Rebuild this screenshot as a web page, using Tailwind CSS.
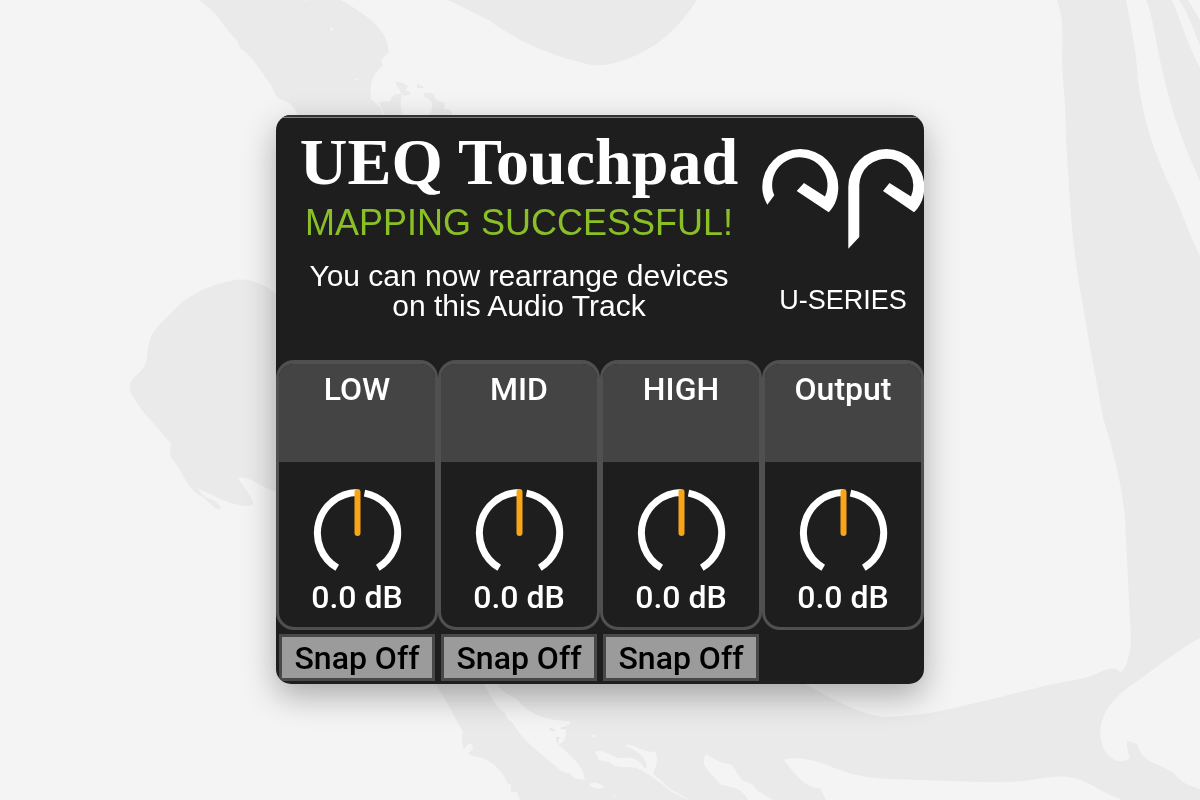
<!DOCTYPE html>
<html lang="en">
<head>
<meta charset="utf-8">
<meta name="viewport" content="width=device-width, initial-scale=1">
<title>UEQ Touchpad</title>
<script src="https://cdn.jsdelivr.net/npm/@tailwindcss/browser@4"></script>
</head>
<body class="bg-[#f4f4f4] font-['Roboto',sans-serif]">
<!-- Decorative backdrop -->
<svg class="fixed inset-0 -z-10 h-full w-full" viewBox="0 0 1200 800" preserveAspectRatio="xMidYMid slice" aria-hidden="true">
  <g fill="#eaeaea">
    <path d="M199 0C213 9 220 20 230 33C239 43 235 37 241 49C249 53 260 69 270 84C277 94 273 97 285 101C292 104 297 110 299 120H386L380 107L371 99C369 84 373 73 383 66L381 60L389 52C387 38 382 30 373 22C364 13 353 8 341 0Z"/>
    <path d="M379 102L390 101C392 95 396 93 402 94C400 103 400 110 404 118H427C434 110 435 100 424 97V93C432 91 435 95 436 100L445 103L444 109C451 109 454 112 450 118H386Z"/>
    <path d="M395 82C401 81 405 84 408 86L406 90L411 93C408 97 403 96 401 93ZM417 84C421 85 423 86 424 88L417 88Z"/>
    <path d="M448 0C465 8 478 15 490 21C527 47 553 55 583 63C604 70 630 60 655 45C672 33 686 17 697 0Z"/>
    <path d="M276 294C263 282 246 278 235 280C210 285 192 293 178 306L158 326C146 340 149 350 146 362C143 372 136 374 132 380C128 387 130 393 135 400C145 417 156 424 163 435L171 443L170 456L176 464C185 478 190 492 203 497L215 508C222 512 222 506 215 501L205 497L197 488C218 498 233 506 248 506C255 506 254 501 248 493L238 478C250 476 257 485 276 492Z"/>
    <path d="M1057 0C1063 16 1063 30 1062 58C1062 76 1066 100 1066 140C1070 200 1072 250 1082 300C1090 350 1097 382 1103 418C1114 452 1123 490 1125 520L1131 640C1130 655 1127 666 1121 673C1115 665 1106 669 1096 674C1081 681 1070 679 1025 691L950 709C920 716 900 716 886 717C860 715 830 698 800 681H434C445 697 455 718 463 732C461 738 462 745 464 749C468 743 472 740 473 748L468 754C475 758 487 755 501 772C508 781 506 784 511 785V792H517L520 800H688L672 792C658 781 648 773 637 768C625 766 617 769 609 762L599 760L595 752C603 748 611 756 618 758C625 758 635 754 644 768H647C647 757 637 750 625 746C632 741 638 752 655 752C659 759 656 766 653 774L663 782C668 790 679 793 689 800H748C742 788 733 787 721 785C716 778 706 770 704 764Q703 760 706 754C717 761 724 764 731 764L742 780L752 784C759 794 765 794 773 800H826L820 788C808 788 799 780 784 760C788 757 806 758 822 763C844 772 860 778 890 779L980 782Q1010 783 1030 780C1060 776 1067 774 1085 782C1102 790 1108 795 1122 800H1200V789C1183 783 1187 786 1172 772C1155 761 1144 765 1137 744Q1130 741 1127 741Q1126 747 1130 758C1121 766 1105 760 1101 740C1097 716 1113 697 1136 682L1173 655Q1185 646 1200 638V256C1187 230 1182 211 1170 186C1155 154 1144 124 1138 80C1136 45 1130 23 1126 0Z"/>
    <path d="M1146 0C1153 15 1154 37 1166 86C1175 122 1184 145 1200 181V68C1185 38 1182 24 1172 0ZM1179 0C1187 11 1191 24 1200 45V20L1188 0Z"/>
  </g>
  <g fill="#f4f4f4">
    <path d="M484 684C490 695 494 705 505 713L507 718Q510 721 512 722C523 743 550 760 560 770C568 775 568 770 574 778Q577 779 585 780C582 763 572 758 558 744Q566 743 566 732L564 727L570 724V721C552 721 530 717 517 699C505 693 499 690 498 684ZM590 784C595 781 600 784 605 787Q600 791 590 786ZM612 795L617 795L615 796ZM592 735H595V737H592Z"/>
    <path d="M330 28H333V31L330 30ZM355 79H359L357 81ZM304 0H308L306 1Z"/>
  </g>
  <g fill="#e6e6e6"><path d="M549 727L555 730V732L550 730ZM556 737H560L557 744ZM561 727H565V729H561Z"/></g>
</svg>

<!-- Shared knob drawing -->
<svg class="hidden" aria-hidden="true">
  <symbol id="knob" viewBox="0 0 90 86">
    <path d="M45 4.500A40.500 40.500 0 0 0 25.200 79.800M52.500 5.100A40.500 40.500 0 0 1 65.800 79.800" fill="none" stroke="#fff" stroke-width="7"/>
    <path d="M45.500 4V45" stroke="#f9a51a" stroke-width="6" stroke-linecap="round"/>
  </symbol>
</svg>

<main class="grid min-h-screen place-items-center pb-px">
  <section class="w-full max-w-[648px] overflow-hidden rounded-[15px] bg-[#1e1e1e] text-white shadow-[0_12px_32px_rgba(0,0,0,0.30)]">
    <div class="h-[2px] bg-[#303333]"></div>
    <div class="h-px bg-[#808080]"></div>

    <header class="grid h-[242px] grid-cols-4">
      <div class="col-span-3 flex flex-col items-center pt-[8px] text-center font-['Liberation_Sans',Arial,sans-serif]">
        <h1 class="font-['Liberation_Serif',serif] text-[66px] leading-[72px] font-bold whitespace-nowrap">UEQ Touchpad</h1>
        <p class="mt-[5px] text-[36px] leading-[40px] whitespace-nowrap text-[#8abf26]" role="status">MAPPING SUCCESSFUL!</p>
        <p class="mt-[18px] text-[30px] leading-[30px]">You can now rearrange devices<br>on this Audio Track</p>
      </div>
      <div class="flex flex-col items-center pt-[30px] font-['Liberation_Sans',Arial,sans-serif]">
        <svg class="h-[101px] w-full" viewBox="762 148 162 101" fill="#fff" role="img" aria-label="Logo">
          <path d="M767.300 204.700C764 199 762.300 193 762.300 187A38 38 0 0 1 838.300 187C838.300 197 835 206 828.700 212.300L796.700 191L804 183L825 196.500A27.700 27.700 0 1 0 773 192L774.300 195.300Z"/>
          <path d="M848.300 248.700V187A38 38 0 0 1 924.300 187C924.300 197 921 206 914 212.300L883 191L889.500 183L911 196.500A27 27 0 1 0 859.300 187V237Z"/>
        </svg>
        <p class="mt-[35px] text-[27px] leading-[32px]">U-SERIES</p>
      </div>
    </header>

    <div class="grid grid-cols-4 text-center text-[32px] leading-[38px] font-medium">
      <div>
        <div class="h-[270px] overflow-hidden rounded-[18px] border-3 border-t-4 border-[#505050]">
          <h2 class="h-[98px] bg-[#444444] pt-[6px]"><label for="low">LOW</label></h2>
          <div class="relative mx-auto mt-[26px] w-[90px]">
            <svg class="h-[86px] w-full"><use href="#knob"/></svg>
            <input id="low" type="range" min="-24" max="24" value="0" class="absolute inset-0 h-full w-full opacity-0">
          </div>
          <output for="low" class="mt-1 block">0.0 dB</output>
        </div>
        <button type="button" class="mx-[3px] mt-1 mb-[3px] block h-[47px] w-[calc(100%-6px)] border-3 border-[#484848] bg-[#9b9b9b] text-black">Snap Off</button>
      </div>
      <div>
        <div class="h-[270px] overflow-hidden rounded-[18px] border-3 border-t-4 border-[#505050]">
          <h2 class="h-[98px] bg-[#444444] pt-[6px]"><label for="mid">MID</label></h2>
          <div class="relative mx-auto mt-[26px] w-[90px]">
            <svg class="h-[86px] w-full"><use href="#knob"/></svg>
            <input id="mid" type="range" min="-24" max="24" value="0" class="absolute inset-0 h-full w-full opacity-0">
          </div>
          <output for="mid" class="mt-1 block">0.0 dB</output>
        </div>
        <button type="button" class="mx-[3px] mt-1 mb-[3px] block h-[47px] w-[calc(100%-6px)] border-3 border-[#484848] bg-[#9b9b9b] text-black">Snap Off</button>
      </div>
      <div>
        <div class="h-[270px] overflow-hidden rounded-[18px] border-3 border-t-4 border-[#505050]">
          <h2 class="h-[98px] bg-[#444444] pt-[6px]"><label for="high">HIGH</label></h2>
          <div class="relative mx-auto mt-[26px] w-[90px]">
            <svg class="h-[86px] w-full"><use href="#knob"/></svg>
            <input id="high" type="range" min="-24" max="24" value="0" class="absolute inset-0 h-full w-full opacity-0">
          </div>
          <output for="high" class="mt-1 block">0.0 dB</output>
        </div>
        <button type="button" class="mx-[3px] mt-1 mb-[3px] block h-[47px] w-[calc(100%-6px)] border-3 border-[#484848] bg-[#9b9b9b] text-black">Snap Off</button>
      </div>
      <div>
        <div class="h-[270px] overflow-hidden rounded-[18px] border-3 border-t-4 border-[#505050]">
          <h2 class="h-[98px] bg-[#444444] pt-[6px]"><label for="output">Output</label></h2>
          <div class="relative mx-auto mt-[26px] w-[90px]">
            <svg class="h-[86px] w-full"><use href="#knob"/></svg>
            <input id="output" type="range" min="-24" max="24" value="0" class="absolute inset-0 h-full w-full opacity-0">
          </div>
          <output for="output" class="mt-1 block">0.0 dB</output>
        </div>
      </div>
    </div>
  </section>
</main>
</body>
</html>
